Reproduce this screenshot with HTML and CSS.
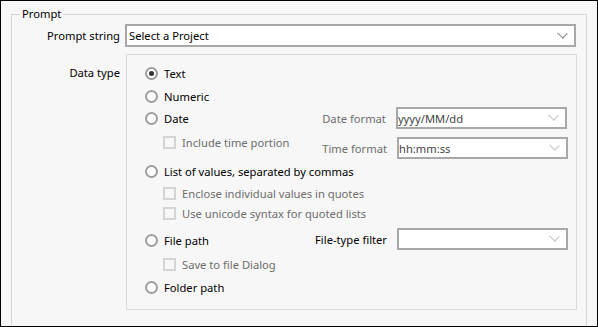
FILE: index.html
```html
<!DOCTYPE html>
<html lang="en">
<head>
<meta charset="UTF-8">
<title>Prompt</title>
<link rel="stylesheet" href="styles.css">
</head>
<body>

<div class="frame">
    <fieldset class="group">
        <legend>Prompt</legend>
        <div class="form-grid">
            <label class="field-label">Prompt string</label>
            <div class="combo">
                <span class="combo-text">Select a Project</span>
                <span class="chevron"></span>
            </div>

            <label class="field-label data-label">Data type</label>
            <div class="panel">
                <div class="opt"><span class="radio checked"></span>Text</div>
                <div class="opt numeric"><span class="radio"></span>Numeric</div>

                <div class="split date-group">
                    <div class="split-left">
                        <div class="opt"><span class="radio"></span>Date</div>
                        <div class="sub include"><span class="check"></span>Include time portion</div>
                    </div>
                    <div class="split-right">
                        <div class="side-row">
                            <span class="side-label disabled">Date format</span>
                            <div class="combo small disabled"><span class="combo-text">yyyy/MM/dd</span><span class="chevron"></span></div>
                        </div>
                        <div class="side-row time">
                            <span class="side-label disabled">Time format</span>
                            <div class="combo small disabled"><span class="combo-text">hh:mm:ss</span><span class="chevron"></span></div>
                        </div>
                    </div>
                </div>

                <div class="opt list"><span class="radio"></span>List of values, separated by commas</div>
                <div class="sub enclose"><span class="check"></span>Enclose individual values in quotes</div>
                <div class="sub"><span class="check"></span>Use unicode syntax for quoted lists</div>

                <div class="split file-group">
                    <div class="split-left">
                        <div class="opt file"><span class="radio"></span>File path</div>
                        <div class="sub save"><span class="check"></span>Save to file Dialog</div>
                    </div>
                    <div class="split-right">
                        <div class="side-row">
                            <span class="side-label">File-type filter</span>
                            <div class="combo small disabled"><span class="combo-text"></span><span class="chevron"></span></div>
                        </div>
                    </div>
                </div>

                <div class="opt folder"><span class="radio"></span>Folder path</div>
            </div>
        </div>
    </fieldset>
</div>

</body>
</html>
```

FILE: styles.css
```css
body {
    margin: 0;
    font-family: "Noto Sans", "Open Sans", sans-serif;
    font-size: 11.2px;
    color: #000;
}

.frame {
    box-sizing: border-box;
    width: 598px;
    height: 327px;
    border: 1px solid #000;
    background-color: #f7f7f7;
    overflow: hidden;
    padding-top: 5px;
}

.group {
    margin: 0 10px;
    padding: 2px 10px 30px 0;
    border: 1px solid #d6d6d6;
    min-width: 0;
}

.group legend {
    margin-left: 8px;
    padding: 0 2px;
    line-height: 16px;
}

.form-grid {
    display: grid;
    grid-template-columns: 108px 1fr;
    column-gap: 5px;
    row-gap: 7px;
}

.field-label {
    text-align: right;
    line-height: 23px;
}

.data-label {
    line-height: 16px;
    padding-top: 11px;
}

/* combo boxes */
.combo {
    box-sizing: border-box;
    height: 23px;
    border: 2px solid #a8a8a8;
    background-color: #fff;
    display: flex;
    align-items: center;
    padding: 0 8px 0 2px;
}

.combo-text {
    flex: 1;
    white-space: nowrap;
}

.chevron {
    width: 6px;
    height: 6px;
    border-right: 1px solid #8a8a8a;
    border-bottom: 1px solid #8a8a8a;
    transform: rotate(45deg) scaleX(1.15);
    margin-top: -5px;
}

.combo.small {
    width: 171px;
    height: 22px;
    padding: 0 8px 0 0;
}

.combo.disabled .combo-text {
    color: #444;
}

.combo.disabled .chevron {
    border-color: #c4c4c4;
}

/* inner panel */
.panel {
    margin: 0 -1px 0 1px;
    border: 1px solid #dadada;
    padding: 7px 8px 11px 18px;
}

.opt {
    display: flex;
    align-items: center;
    height: 22px;
    white-space: nowrap;
}

.sub {
    display: flex;
    align-items: center;
    height: 20px;
    padding-left: 18px;
    color: #6d6d6d;
    white-space: nowrap;
}

.radio {
    box-sizing: border-box;
    width: 13px;
    height: 13px;
    border: 2px solid #9d9d9d;
    border-radius: 50%;
    background-color: #fff;
    margin-right: 6px;
    display: flex;
    align-items: center;
    justify-content: center;
}

.radio.checked::after {
    content: "";
    width: 5px;
    height: 5px;
    border-radius: 50%;
    background-color: #333;
}

.check {
    box-sizing: border-box;
    width: 13px;
    height: 13px;
    border: 2px solid #d4d4d4;
    background-color: #f7f7f7;
    margin-right: 6px;
}

.numeric { margin-top: 1px; }
.include { margin-top: 3px; }
.list { margin-top: 1px; }
.enclose { margin-top: 1px; }
.file-group { margin-top: 5px; }
.file { margin-top: 1px; }
.save { margin-top: 3px; }
.folder { margin-top: 2px; }

.split {
    display: flex;
    align-items: flex-start;
}

.split-left {
    flex: 1;
}

.side-row {
    display: flex;
    align-items: center;
}

.side-row.time {
    margin-top: 8px;
}

.side-label {
    margin-right: 10px;
    white-space: nowrap;
}

.disabled {
    color: #6d6d6d;
}
```
